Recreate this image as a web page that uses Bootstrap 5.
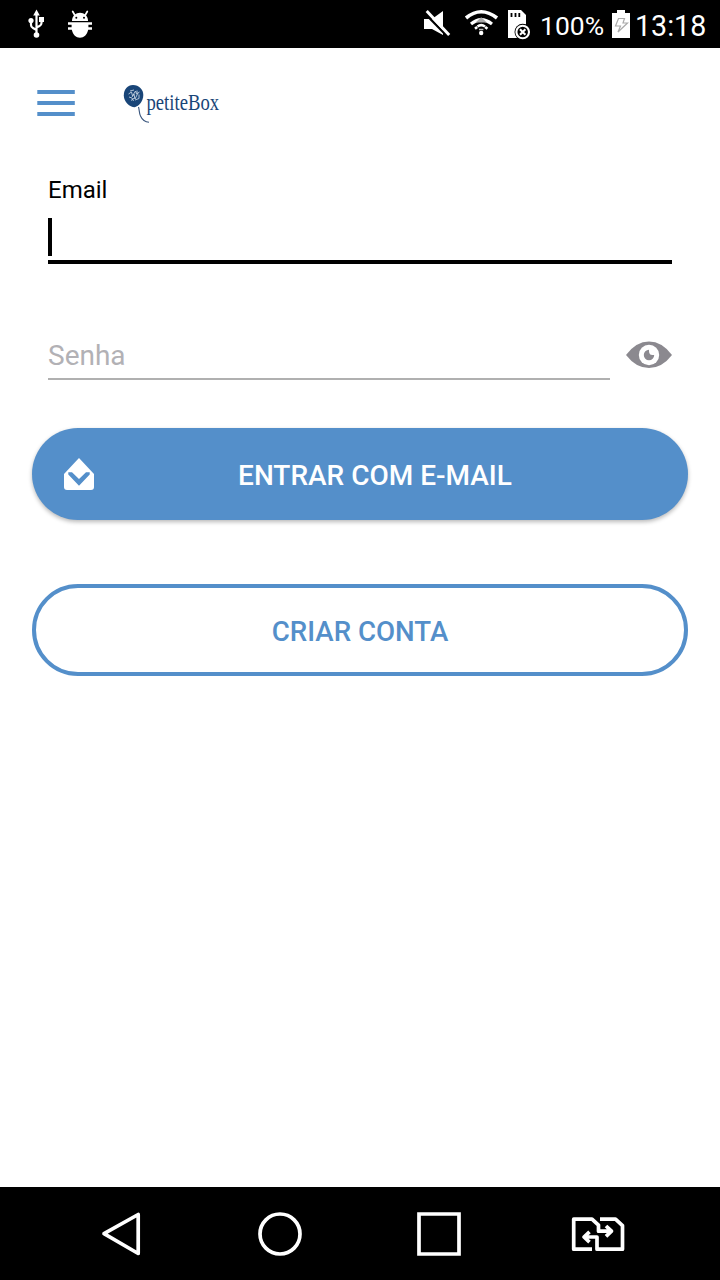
<!DOCTYPE html>
<html lang="pt-BR">
<head>
<meta charset="utf-8">
<meta name="viewport" content="width=device-width, initial-scale=1">
<title>petiteBox</title>
<link href="https://cdn.jsdelivr.net/npm/bootstrap@5.3.0/dist/css/bootstrap.min.css" rel="stylesheet">
<style>
  :root { --pb-blue: #548fca; --pb-navy: #194578; }
  body { font-family: Roboto, "Noto Sans", sans-serif; background: #fff; color: #000; }
  svg { display: block; flex: none; overflow: visible; }
  .screen { height: 1280px; width: 720px; overflow: hidden; }
  .status { height: 48px; padding: 0 13px 0 24px; background: #000; color: #fff; line-height: 48px; }
  .status-pct { font-size: 26.5px; width: 65px; margin: 0 7px 0 8px; padding-top: 3px; white-space: nowrap; }
  .status-time { font-size: 28.6px; width: 72px; margin-left: 5px; padding-top: 3px; white-space: nowrap; }
  .topbar { height: 110px; padding: 12px 0 0 32px; }
  .fields { padding: 0 48px; }
  .field-label { font-size: 24px; line-height: 28px; margin-top: 18px; }
  .email-box { height: 52px; margin-top: 8px; border-bottom: 4px solid #000; padding-top: 6px; }
  .caret { width: 4px; height: 38px; background: #000; }
  .pass-row { height: 50px; margin-top: 66px; margin-bottom: 48px; }
  .pass-box { font-size: 28px; line-height: 48px; height: 50px; border-bottom: 2px solid #b0b0b0; color: #b2b1b5; padding-top: 2px; }
  .actions { padding: 0 32px; gap: 64px; }
  .pill { height: 92px; font-size: 28px; font-weight: 500; line-height: 1; padding: 0; color: var(--pb-blue); border: 4px solid var(--pb-blue); }
  .pill-fill { background: var(--pb-blue); color: #fff; box-shadow: 0 2px 4px rgba(0,0,0,.28); border: 0; }
  .pill-fill svg { margin-left: 32px; }
  .pill-fill span { padding: 4px 32px 0 0; }
  .pill-line { font-size: 27.7px; }
  .sysnav { height: 93px; background: #000; }
</style>
</head>
<body>
<div class="screen d-flex flex-column">
  <header class="status d-flex align-items-center">
    <svg width="24" height="48" viewBox="24 0 24 48" fill="none" stroke="#fff" stroke-width="2.2">
      <path d="M36.500 15v20M31 21v4q0 2 2 3l3.500 2M41.500 20v3q0 2-2 3l-3 1.500"/>
      <path d="M36.500 9.500l3.300 6h-6.600zM39 17h5v5h-5z" fill="#fff" stroke="none"/>
      <circle cx="31" cy="20.500" r="2.600" fill="#fff" stroke="none"/><circle cx="36.500" cy="35" r="2.800" fill="#fff" stroke="none"/>
    </svg>
    <svg class="ms-3" width="32" height="48" viewBox="64 0 32 48" fill="#fff">
      <path d="M72 21c0-11 16-11 16 0z"/>
      <path d="M75 15.500l-2.300-4M85 15.500l2.300-4" stroke="#fff" stroke-width="1.700" stroke-linecap="round"/>
      <circle cx="76.300" cy="17.800" r="1" fill="#000"/><circle cx="84" cy="17.800" r="1" fill="#000"/>
      <path d="M68 22.300h24v2.500h-3.600v2.400H92v2.600h-3.800C87 35 84 37.800 80 37.800S73 35 71.800 29.800H68v-2.600h3.600v-2.400H68z"/>
    </svg>
    <svg class="ms-auto" width="34" height="48" viewBox="420 0 34 48">
      <path d="M424 19h8l11-8v24l-11-6h-8z" fill="#fff"/>
      <path d="M425 13.500l22.500 23" stroke="#000" stroke-width="2.500"/>
      <path d="M426.700 11l22.500 24" stroke="#fff" stroke-width="2.900"/>
    </svg>
    <svg width="50" height="48" viewBox="454 0 50 48" fill="none" stroke="#fff">
      <path d="M466 18q15-12.500 31 0" stroke-width="3.600"/>
      <path d="M471 24q10-8.500 21 0" stroke-width="3.200"/>
      <path d="M475.500 22.500l5.700-5.200 5.700 5.200z" fill="#aaa" stroke="none"/>
      <path d="M475 28.800l2.200-1.800M485.200 27l2.200 1.800M477.500 26.500q3.700-2.800 7.500 0" stroke-width="2.600"/>
      <path d="M479 29.500h4.400" stroke="#bbb" stroke-width="1.500"/>
      <circle cx="481.200" cy="33" r="2.200" fill="#fff" stroke="none"/>
    </svg>
    <svg width="28" height="48" viewBox="504 0 28 48">
      <path d="M508 10h13l5 5v23h-18z" fill="#fff"/>
      <path d="M511.500 13v4M515.500 13v4M519.300 13v4" stroke="#000" stroke-width="1.800"/>
      <circle cx="522.700" cy="32" r="8.200" fill="#000"/>
      <circle cx="522.700" cy="32" r="6.300" fill="none" stroke="#fff" stroke-width="2.100"/>
      <path d="M520 29.300l5.400 5.400M525.400 29.300l-5.400 5.400" stroke="#fff" stroke-width="2.100"/>
    </svg>
    <span class="status-pct">100%</span>
    <svg width="18" height="48" viewBox="612 0 18 48">
      <path d="M612 13h5v-3h8v3h5v25h-18z" fill="#fff"/>
      <path d="M618.500 18.500h6l-1.500 4.500h4.500l-9.500 9 2.500-6h-5z" fill="none" stroke="#aaa" stroke-width="1.200"/>
    </svg>
    <span class="status-time">13:18</span>
  </header>

  <nav class="topbar d-flex align-items-start">
    <svg width="48" height="96" viewBox="32 60 48 96">
      <path d="M37.300 92h37.500M37.300 103h37.500M37.300 114h37.500" stroke="#548fca" stroke-width="4"/>
    </svg>
    <svg class="ms-4" width="124" height="96" viewBox="104 60 124 96">
      <path d="M133 85c6 0 10.300 4.500 10.300 10 0 6-4.300 11-8.600 12.200-5 0-10.900-5.200-10.900-11.700 0-6 3.700-10.500 9.200-10.500z" fill="#194578"/>
      <path d="M128.500 94l3-2 1 4 3-5 1 3 3-2M129 97l3 1 1.500 3M132 97l2-3 1 5 3-6M135 100l4-1.500 0-4M130 91l4-1M137 90.500v3M131 100.500l4-3" fill="none" stroke="#c3d1e0" stroke-width=".9"/>
      <path d="M138.500 107c1 3 .5 6 2 9 1.700 3.800 4.500 6 8.500 6.300" fill="none" stroke="#38547c" stroke-width="1.100"/>
      <text transform="translate(146.500 110) scale(.778 1)" font-family="Liberation Serif, serif" font-size="24" fill="#194578">petiteBox</text>
    </svg>
  </nav>

  <main class="flex-grow-1">
    <div class="fields">
      <div class="field-label">Email</div>
      <div class="email-box"><div class="caret"></div></div>
      <div class="pass-row d-flex">
        <div class="pass-box flex-grow-1">Senha</div>
        <svg class="ms-3" width="46" height="50" viewBox="626 330 46 50">
          <path d="M626 355q10-13.500 23-13.500T672 355q-10 13-23 13t-23-13z" fill="#8b898f"/>
          <circle cx="649" cy="355" r="10.200" fill="#fff"/>
          <path d="M649 349.800q0 4 1 4.200 0 1 4.200 1A5.200 5.200 0 1 1 649 349.800z" fill="#8b898f"/>
        </svg>
      </div>
    </div>
    <div class="actions d-flex flex-column">
      <button class="btn pill pill-fill rounded-pill d-flex align-items-center w-100" type="button">
        <svg width="30" height="92" viewBox="64 428 30 92">
          <path d="M79 458l15 16v13q0 3-3 3H67q-3 0-3-3v-13z" fill="#fff"/>
          <path d="M68.300 472.300h3.700l7 6.700 7-6.700h3.700v2.200L79 485.800l-10.700-11.300z" fill="#548fca"/>
        </svg>
        <span class="flex-grow-1 text-center">ENTRAR COM E-MAIL</span>
      </button>
      <button class="btn pill pill-line rounded-pill w-100" type="button"><span class="d-block pt-1">CRIAR CONTA</span></button>
    </div>
  </main>

  <footer class="sysnav d-flex align-items-center">
    <svg width="720" height="93" viewBox="0 1187 720 93" fill="none" stroke="#fff" stroke-width="3.700">
      <path d="M104 1233.700L138.200 1214.500v39z" stroke-linejoin="round"/>
      <circle cx="280" cy="1234" r="20"/>
      <path d="M419 1214h40v40h-40z"/>
      <path d="M592 1249.200h-18.300v-30H592l6.500 6v6H611M606 1226l5.500 5.200-5.500 5.200M600 1219.200h15.500l7 6.500v23.500H597v-12.200H585M589.500 1231.800l-5.500 5.200 5.500 5.200" stroke-width="3.700" stroke-linejoin="round"/>
    </svg>
  </footer>
</div>
<script src="https://cdn.jsdelivr.net/npm/bootstrap@5.3.0/dist/js/bootstrap.bundle.min.js"></script>
</body>
</html>
